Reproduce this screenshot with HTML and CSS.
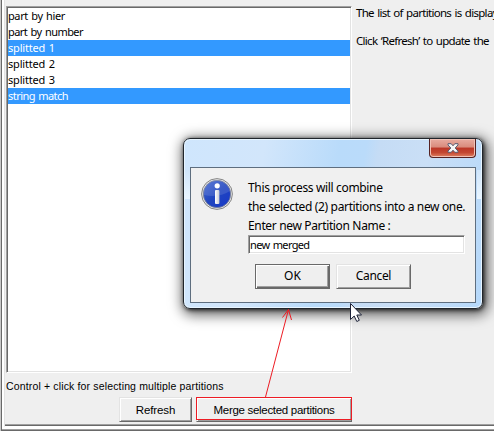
FILE: index.html
```html
<!DOCTYPE html>
<html lang="en">
<head>
<meta charset="utf-8">
<title>Partitions</title>
<link rel="stylesheet" href="styles.css">
</head>
<body>
<div class="frame">
  <div class="panel">
    <main class="columns">
      <section class="left">
        <ul class="list">
          <li>part by hier</li>
          <li class="tight">part by number</li>
          <li class="loose selected">splitted 1</li>
          <li class="loose">splitted 2</li>
          <li class="loose">splitted 3</li>
          <li class="tight selected">string match</li>
        </ul>
        <p class="hint">Control + click for selecting multiple partitions</p>
        <div class="actions">
          <button class="button refresh">Refresh</button>
          <button class="button merge">Merge selected partitions</button>
        </div>
      </section>
      <aside class="help">
        <p>The list of partitions is display</p>
        <p>Click ‘Refresh’ to update the</p>
      </aside>
    </main>
  </div>
</div>

<div class="dialog">
  <div class="titlebar">
    <div class="close">
      <svg width="12" height="10" viewBox="0 0 12 10"><path d="M1 .7h3.200L6 2.800 7.800.7H11v1.200L8.200 5 11 8.100v1.200H7.800L6 7.200 4.200 9.300H1V8.100L3.800 5 1 1.900z" fill="#f6f6f6" stroke="#595b70" stroke-width="1"/></svg>
    </div>
  </div>
  <div class="content">
    <svg class="info" width="32" height="32" viewBox="0 0 32 32">
      <defs>
        <linearGradient id="blue" x1="0" y1="0" x2="1" y2="1"><stop offset="0" stop-color="#4468d1"/><stop offset=".5" stop-color="#2045bf"/><stop offset="1" stop-color="#1838c9"/></linearGradient>
        <linearGradient id="stem" x1="0" x2="1"><stop offset="0" stop-color="#fff"/><stop offset="1" stop-color="#c8cbd6"/></linearGradient>
      </defs>
      <circle cx="16" cy="16" r="15.4" fill="#e9e9e9" stroke="#858585"/>
      <circle cx="16" cy="16" r="13.7" fill="url(#blue)" stroke="#7d8494" stroke-width=".8"/>
      <path d="M3 17A13 13 0 0 1 29 13Q18 20 3 17z" fill="#fff" opacity=".12"/>
      <circle cx="16.2" cy="7.8" r="2.6" fill="#fff"/>
      <rect x="14" y="12" width="4.4" height="14" rx="1" fill="url(#stem)"/>
    </svg>
    <div class="form">
      <p>This process will combine</p>
      <p>the selected (2) partitions into a new one.</p>
      <p>Enter new Partition Name :</p>
      <div class="field">new merged</div>
      <div class="choices">
        <button class="button ok">OK</button>
        <button class="button cancel">Cancel</button>
      </div>
    </div>
  </div>
</div>

<svg class="overlay" width="494" height="431" viewBox="0 0 494 431">
  <g fill="none" stroke="#ed1c24" stroke-width="1">
    <path d="M196.500 397.500H351.500V419.500H196.500z" shape-rendering="crispEdges"/>
    <path d="M265.500 397L288.500 309.500M282.500 317.500L288.500 309.500L291.500 320"/>
  </g>
  <path d="M350.500 303.500V319.500L354.200 316L356.800 321.500L359.300 320.300L356.800 315H361.500z" fill="#fff" stroke="#1d2238"/>
</svg>
</body>
</html>
```
FILE: styles.css
```css
* { box-sizing: border-box; }
body {
  margin: 0;
  width: 494px;
  height: 431px;
  overflow: hidden;
  position: relative;
  background: #efefef;
  color: #000;
  font: 12px/16px "Noto Sans", sans-serif;
}
p, ul { margin: 0; padding: 0; list-style: none; }

.frame {
  height: 431px;
  padding: 0 0 4px 2px;
  border-left: 1px solid #c8c8c8;
  box-shadow: inset 1px 0 #696969, inset 0 -1px #696969, inset 0 -2px #a0a0a0;
  background: #fff;
}
.panel {
  height: 427px;
  margin-left: 1px;
  border-left: 1px solid #e3e3e3;
  border-bottom: 1px solid #fff;
  box-shadow: inset 0 -1px #696969, inset 0 -2px #a0a0a0;
  background: #efefef;
}
.columns { display: flex; padding: 6px 0 0 1px; }
.left { width: 346px; flex: none; }
.list {
  height: 367px;
  background: #fff;
  border: 1px solid;
  border-color: #a0a0a0 #fff #fff #a0a0a0;
  box-shadow: inset 1px 1px #696969, inset -1px -1px #e3e3e3;
  padding: 1px;
}
.list li { height: 16px; white-space: nowrap; font-size: 11px; letter-spacing: -.4px; word-spacing: 1px; }
.list .tight { letter-spacing: -.55px; }
.list .loose { letter-spacing: -.2px; }
.list .selected { background: #3399ff; color: #fff; }
.hint { font: 10.5px/16px "Liberation Sans", sans-serif; margin-top: 5px; white-space: nowrap; letter-spacing: .15px; }
.actions { display: flex; gap: 4px; margin: 3px 0 0 113px; }
.button {
  height: 25px;
  padding: 0 0 1px;
  border: 1px solid;
  border-color: #e3e3e3 #696969 #696969 #e3e3e3;
  box-shadow: inset 1px 1px #fff, inset -1px -1px #a0a0a0;
  background: #efefef;
  color: #000;
  font: 12px/16px "Noto Sans", sans-serif;
  white-space: nowrap;
}
.refresh, .merge { font: 11.5px/16px "Liberation Sans", sans-serif; letter-spacing: -.3px; padding-top: 2px; }
.refresh { width: 73px; letter-spacing: -.1px; }
.merge { width: 156px; }
.help { flex: 1; min-width: 0; margin-top: -1px; overflow: hidden; padding-left: 4px; white-space: nowrap; font-size: 11.5px; letter-spacing: -.7px; word-spacing: 1px; }
.help p { margin-bottom: 12px; }

.dialog {
  position: absolute;
  left: 183px;
  top: 138px;
  width: 300px;
  height: 171px;
  padding: 0 6px 6px;
  border: 1px solid #20252b;
  border-radius: 7px;
  background:
    linear-gradient(#d0e5fa, #e9f5ff) 1px 31px / 5px 29px no-repeat,
    linear-gradient(#d0e5fa, #e9f5ff) 293px 31px / 4px 29px no-repeat,
    linear-gradient(100deg, #cfe6fd, #d2e6fb 25%, #b9dbfa 48%, #badbfa 56%, #c5dcf5 60%, #cadff6 75%, #b5d8fa);
  box-shadow: inset 0 0 0 1px #e8f5ff, 1px 1px 4px #000c, 2px 3px 13px 3px #0009;
}
.titlebar { height: 28px; display: flex; justify-content: flex-end; }
.close {
  width: 47px;
  height: 19px;
  display: flex;
  align-items: center;
  justify-content: center;
  border: 1px solid #552222;
  border-top: 0;
  border-radius: 0 0 4px 4px;
  background: linear-gradient(#e8aca0, #d98b7c 45%, #bc3727 50%, #c34731 75%, #df8162);
  box-shadow: inset 0 0 0 1px #f1c1b5;
}
.content {
  height: 136px;
  border: 1px solid #5e6e7f;
  background: #f0f0f0;
  display: flex;
  padding: 10px 0 0 10px;
}
.info { flex: none; }
.form { padding-left: 15px; white-space: nowrap; }
.form p { height: 19px; line-height: 19px; letter-spacing: -.35px; }
.field {
  width: 217px;
  height: 19px;
  background: #fff;
  border: 1px solid;
  border-color: #a0a0a0 #fff #fff #a0a0a0;
  box-shadow: inset 1px 1px #696969, inset -1px -1px #e3e3e3;
  padding-left: 1px;
  line-height: 17px;
  font-size: 11px;
  letter-spacing: -.65px;
  word-spacing: 1px;
}
.choices { display: flex; gap: 6px; margin: 10px 0 0 7px; }
.ok {
  width: 75px;
  border-color: #696969;
  box-shadow: inset 1px 1px #fff, inset -1px -1px #696969, inset -2px -2px #a0a0a0;
}
.cancel { width: 75px; letter-spacing: -.35px; }
.overlay { position: absolute; left: 0; top: 0; pointer-events: none; }
```
